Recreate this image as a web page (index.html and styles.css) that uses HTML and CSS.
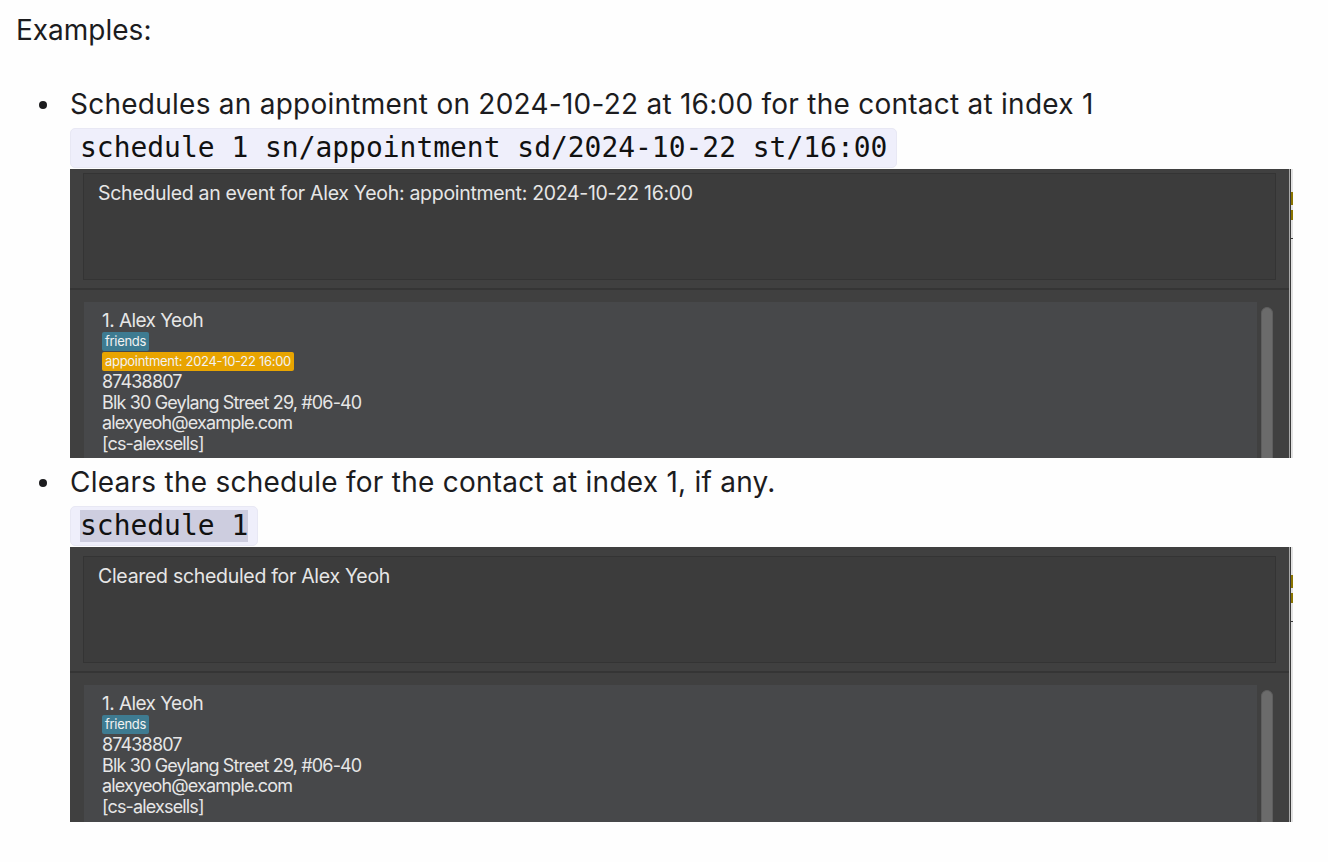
FILE: index.html
```html
<!DOCTYPE html>
<html>
<head>
<meta charset="utf-8">
<link rel="stylesheet" href="styles.css">
</head>
<body>
<p class="intro">Examples:</p>
<ul class="examples">
  <li class="example">
    <div class="example-body">
      <div class="desc">Schedules an appointment on 2024-10-22 at 16:00 for the contact at index 1</div>
      <div class="code-row"><code class="code">schedule 1 sn/appointment sd/2024-10-22 st/16:00</code></div>
      <div class="shot shot-a">
        <div class="shot-main">
          <div class="result-area">
            <div class="result-box">Scheduled an event for Alex Yeoh: appointment: 2024-10-22 16:00</div>
          </div>
          <div class="list-pane">
            <div class="card">
              <div class="name">1. Alex Yeoh</div>
              <div class="tags"><span class="tag tag-friends">friends</span></div>
              <div class="tags"><span class="tag tag-appt">appointment: 2024-10-22 16:00</span></div>
              <div class="detail">87438807</div>
              <div class="detail">Blk 30 Geylang Street 29, #06-40</div>
              <div class="detail">alexyeoh@example.com</div>
              <div class="detail">[cs-alexsells]</div>
            </div>
            <div class="scrollbar"></div>
          </div>
        </div>
        <div class="edge-light"></div>
        <div class="edge-dark"></div>
        <div class="edge-strip">
          <div class="strip-yellow first"></div>
          <div class="strip-yellow second"></div>
          <div class="strip-line"></div>
        </div>
      </div>
    </div>
  </li>
  <li class="example">
    <div class="example-body">
      <div class="desc">Clears the schedule for the contact at index 1, if any.</div>
      <div class="code-row"><code class="code"><span class="selected">schedule 1</span></code></div>
      <div class="shot shot-b">
        <div class="shot-main">
          <div class="result-area">
            <div class="result-box">Cleared scheduled for Alex Yeoh</div>
          </div>
          <div class="list-pane">
            <div class="card">
              <div class="name">1. Alex Yeoh</div>
              <div class="tags"><span class="tag tag-friends">friends</span></div>
              <div class="detail">87438807</div>
              <div class="detail">Blk 30 Geylang Street 29, #06-40</div>
              <div class="detail">alexyeoh@example.com</div>
              <div class="detail">[cs-alexsells]</div>
            </div>
            <div class="scrollbar"></div>
          </div>
        </div>
        <div class="edge-light"></div>
        <div class="edge-dark"></div>
        <div class="edge-strip">
          <div class="strip-yellow first"></div>
          <div class="strip-yellow second"></div>
          <div class="strip-line"></div>
        </div>
      </div>
    </div>
  </li>
</ul>
</body>
</html>
```
FILE: styles.css
```css
html, body {
  margin: 0;
  padding: 0;
}
body {
  background: #fefefe;
  color: #1c1c1e;
  font-family: Inter, "Noto Sans", sans-serif;
  font-size: 28px;
  letter-spacing: 0.25px;
  line-height: 36px;
  padding: 12px 0 0 16px;
}
.intro {
  margin: 0;
  height: 36px;
  letter-spacing: 0;
}
.examples {
  list-style: none;
  margin: 40px 0 0 0;
  padding: 0 0 0 23px;
}
.example {
  display: grid;
  grid-template-columns: 31px 1fr;
}
.example::before {
  content: "";
  width: 8px;
  height: 8px;
  border-radius: 50%;
  background: #1c1c1e;
  margin-top: 13px;
}
.example + .example {
  margin-top: 8px;
}
.example-body {
  display: flex;
  flex-direction: column;
  align-items: flex-start;
}
.desc {
  line-height: 32px;
  padding-bottom: 4px;
  box-sizing: border-box;
  height: 36px;
}
.code-row {
  margin-top: 4px;
  display: flex;
}
.code {
  font-family: "DejaVu Sans Mono", "Liberation Mono", monospace;
  font-size: 27.95px;
  letter-spacing: 0;
  line-height: 32px;
  color: #111;
  background: #efeffb;
  border: 1px solid #e8e8f4;
  border-radius: 5px;
  padding: 3px 9px;
}
.selected {
  background: #cdcddf;
  display: inline-block;
  line-height: 32px;
}
.shot {
  margin-top: 1px;
  display: flex;
  overflow: hidden;
  background: #fefefe;
  letter-spacing: 0;
}
.shot-a { height: 289px; }
.shot-b { height: 275px; }
.shot-main {
  width: 1219px;
  background: #404040;
  display: flex;
  flex-direction: column;
  font-family: Inter, "Noto Sans", sans-serif;
  color: #e6e6e6;
}
.result-area {
  padding: 4px 13px 0 13px;
}
.shot-b .result-area {
  padding-top: 9px;
}
.result-box {
  box-sizing: border-box;
  height: 107px;
  border: 1px solid #343434;
  background: #3c3c3c;
  padding: 7px 14px 0 14px;
  font-size: 19.5px;
  line-height: 24px;
  letter-spacing: -0.3px;
}
.list-pane {
  margin-top: 8px;
  border-top: 2px solid #353535;
  padding: 12px 16px 0 14px;
  display: flex;
  gap: 4px;
  align-items: flex-start;
  flex: 1;
}
.card {
  flex: 1;
  background: #47484a;
  padding: 8px 18px 20px 18px;
  display: flex;
  flex-direction: column;
  align-items: flex-start;
}
.name {
  font-size: 19px;
  line-height: 21px;
  letter-spacing: -0.55px;
}
.tags {
  display: flex;
  margin-top: 1px;
}
.tag {
  font-size: 13px;
  line-height: 19px;
  height: 19px;
  padding: 0 3px;
  border-radius: 2px;
  color: #f2f2f2;
  letter-spacing: -0.3px;
}
.tag-friends {
  background: #3e7b91;
}
.tag-appt {
  background: #e8a400;
}
.detail {
  font-size: 18px;
  line-height: 20.6px;
  letter-spacing: -0.85px;
}
.tags + .detail {
  margin-top: 1px;
}
.scrollbar {
  width: 12px;
  height: 400px;
  margin-top: 5px;
  background: #6b6b6b;
  border: 1px solid #5e5e5e;
  box-sizing: border-box;
  border-radius: 6px 6px 0 0;
}
.edge-light {
  width: 1px;
  background: #a9a9a9;
}
.edge-dark {
  width: 1px;
  background: #3a3a3a;
}
.edge-strip {
  width: 2px;
  background: #e2e2e2;
  display: flex;
  flex-direction: column;
}
.strip-yellow {
  background: #8a7400;
}
.strip-yellow.first {
  margin-top: 23px;
  height: 13px;
}
.strip-yellow.second {
  margin-top: 5px;
  height: 10px;
}
.shot-b .strip-yellow.first {
  margin-top: 28px;
}
.strip-line {
  margin-top: 18px;
  height: 1px;
  background: #3a3a3a;
}
```
